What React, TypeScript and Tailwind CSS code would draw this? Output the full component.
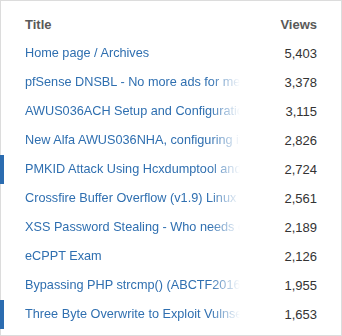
const rows = [
  { title: 'Home page / Archives', views: '5,403' },
  { title: 'pfSense DNSBL - No more ads for me', views: '3,378' },
  { title: 'AWUS036ACH Setup and Configuration', views: '3,115' },
  { title: 'New Alfa AWUS036NHA, configuring it', views: '2,826' },
  { title: 'PMKID Attack Using Hcxdumptool and Hashcat', views: '2,724', active: true },
  { title: 'Crossfire Buffer Overflow (v1.9) Linux', views: '2,561' },
  { title: 'XSS Password Stealing - Who needs cookies', views: '2,189' },
  { title: 'eCPPT Exam', views: '2,126' },
  { title: 'Bypassing PHP strcmp() (ABCTF2016)', views: '1,955' },
  { title: 'Three Byte Overwrite to Exploit Vulnserver', views: '1,653', active: true },
]

export default function App() {
  return (
    <div className="w-[342px] h-[336px] bg-white border border-[#dcdcdc] pt-[9px] font-['Liberation_Sans',Arial,sans-serif] text-[12.7px]">
      {/* Header */}
      <div className="flex items-center justify-between h-[29px] px-6 font-bold text-[13px] text-[#595959]">
        <span>Title</span>
        <span>Views</span>
      </div>

      {/* Rows */}
      {rows.map((row) => (
        <div key={row.title} className="relative flex items-center justify-between h-[29px] px-6">
          {row.active && <div className="absolute -left-px top-0 h-full w-[4px] bg-[#2b6cb0]" />}
          <div className="w-[215px] overflow-hidden whitespace-nowrap text-[#2f6fb0] [mask-image:linear-gradient(to_right,black_86%,transparent)]">
            {row.title}
          </div>
          <span className="text-[13px] text-[#333]">{row.views}</span>
        </div>
      ))}
    </div>
  )
}
